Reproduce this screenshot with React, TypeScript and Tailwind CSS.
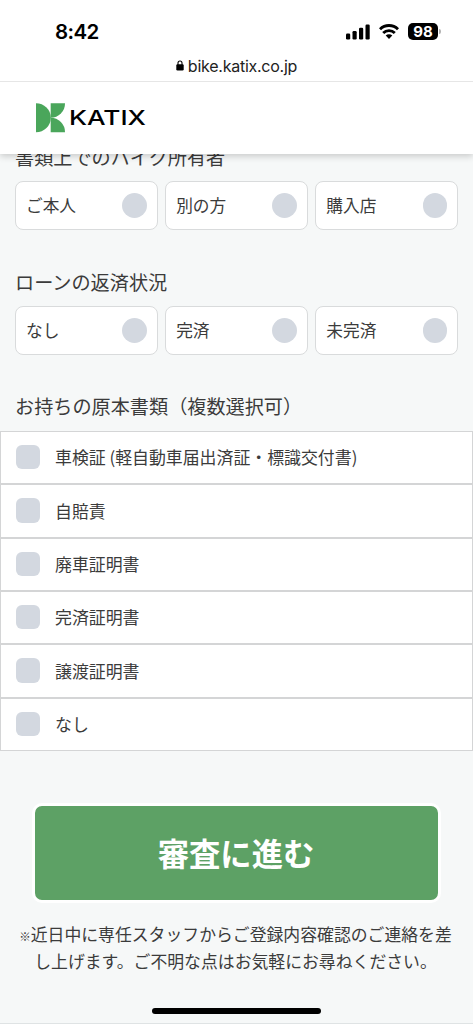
const owners = ["ご本人", "別の方", "購入店"];
const loans = ["なし", "完済", "未完済"];
const documents = [
  "車検証 (軽自動車届出済証・標識交付書)",
  "自賠責",
  "廃車証明書",
  "完済証明書",
  "譲渡証明書",
  "なし",
];

function StatusBar() {
  return (
    <div className="flex h-[52px] items-center justify-between pt-[11px] pr-[32px] pl-[55px]">
      <span className="mt-px font-['Inter'] text-[20.5px] leading-none font-semibold tracking-[-0.6px] text-black">
        8:42
      </span>
      <div className="flex items-center">
        <svg width="24" height="16" viewBox="0 0 24 16" className="mr-[9px]">
          <rect x="0" y="9.5" width="4.2" height="6" rx="1.2" />
          <rect x="6.5" y="7" width="4.2" height="8.5" rx="1.2" />
          <rect x="13" y="3.8" width="4.2" height="11.7" rx="1.2" />
          <rect x="19.5" y="0.5" width="4.2" height="15" rx="1.2" />
        </svg>
        <svg width="20" height="15" viewBox="0 0 20 15" fill="none" stroke="black" strokeWidth="2.9" className="mr-[9px]">
          <path d="M1 5.2a12.8 12.8 0 0 1 18 0" />
          <path d="M4.2 9a8.2 8.2 0 0 1 11.6 0" />
          <path d="M10 15 6.7 11.6a4.7 4.7 0 0 1 6.6 0z" fill="black" stroke="none" />
        </svg>
        <span className="flex h-[17px] w-[30px] items-center justify-center rounded-[5px] bg-black font-['Inter'] text-[15px] leading-none font-bold text-white">
          98
        </span>
        <span className="ml-px h-[5px] w-[2px] rounded-r-full bg-[#b4b4b4]" />
      </div>
    </div>
  );
}

function Logo() {
  return (
    <svg width="112" height="30" viewBox="0 0 112 30" role="img" aria-label="KATIX">
      <g fill="#4aa65b">
        <path d="M0 0.2a14.8 14.5 0 0 1 0 29z" />
        <path d="M14.7 0.2H29a14.3 14.3 0 0 1-14.3 14.5z" />
        <path d="M14.7 14.7a14.3 14.3 0 0 1 14.3 14.5H14.7z" />
      </g>
      <text
        x="33"
        y="22"
        textLength="77"
        lengthAdjust="spacingAndGlyphs"
        className="fill-black font-['Inter'] text-[20.5px] font-medium"
      >
        KATIX
      </text>
    </svg>
  );
}

function RadioGroup({ title, options }: { title: string; options: string[] }) {
  return (
    <section className="px-[15px]">
      <h2 className="text-[19.15px] leading-7">{title}</h2>
      <div className="mt-[10px] grid grid-cols-3 gap-[7.5px]">
        {options.map((option) => (
          <label
            key={option}
            className="flex h-[49px] items-center justify-between rounded-lg border border-[#d9dbdc] bg-white pr-[10px] pl-[10px] text-[16.7px]"
          >
            {option}
            <span className="size-[24.5px] rounded-full bg-[#d3d8e0]" />
          </label>
        ))}
      </div>
    </section>
  );
}

export default function App() {
  return (
    <div className="flex h-[1024px] flex-col overflow-hidden bg-[#f6f8f8] font-['Noto_Sans_CJK_JP',sans-serif] text-[#3b3b3b]">
      <header className="relative z-10 h-[154px] shrink-0 bg-white shadow-[0_2px_7px_rgba(0,0,0,0.2)]">
        <StatusBar />
        <div className="flex h-[30px] items-center justify-center gap-[4px] border-b border-[#e6e6e6] pb-[2px]">
          <svg width="8" height="11" viewBox="0 0 8 11">
            <rect x="0.3" y="4.3" width="7.4" height="6.2" rx="1.2" />
            <path d="M2 5V3a2 2 0 0 1 4 0v2" fill="none" stroke="black" strokeWidth="1.1" />
          </svg>
          <span className="font-['Inter'] text-[16px] leading-none tracking-[-0.25px] text-[#222]">
            bike.katix.co.jp
          </span>
        </div>
        <div className="flex h-[72px] items-center pl-[36px]">
          <Logo />
        </div>
      </header>

      <main className="-mt-[11px]">
        <RadioGroup title="書類上でのバイク所有者" options={owners} />
        <div className="mt-[38px]">
          <RadioGroup title="ローンの返済状況" options={loans} />
        </div>

        <section className="mt-[37px]">
          <h2 className="px-[15px] text-[19.15px] leading-7">お持ちの原本書類（複数選択可）</h2>
          <div className="mt-[11px] grid h-[320px] grid-rows-6">
            {documents.map((doc) => (
              <label
                key={doc}
                className="flex items-center gap-[15px] border border-[#d4d5d6] bg-white pb-px pl-[14.5px] text-[16.9px]"
              >
                <span className="size-[24.5px] rounded-md bg-[#d3d8e0]" />
                {doc}
              </label>
            ))}
          </div>
        </section>

        <div className="mt-[52px] px-[32px]">
          <button className="h-[100px] w-full rounded-[10px] border-3 border-white bg-[#5da165] pr-px text-[31.3px] font-bold text-white">
            審査に進む
          </button>
        </div>
        <p className="mt-[18px] pr-[16px] pl-[14px] text-center text-[16.85px] leading-[26.5px]">
          <span className="text-[11.5px] leading-none font-bold">※</span>近日中に専任スタッフからご登録内容確認のご連絡を差
          <br />
          し上げます。ご不明な点はお気軽にお尋ねください。
        </p>
      </main>

      <footer className="mt-auto flex h-[16px] justify-center border-b border-[#dfe3e4]">
        <span className="h-[6px] w-[169px] rounded-full bg-black" />
      </footer>
    </div>
  );
}
